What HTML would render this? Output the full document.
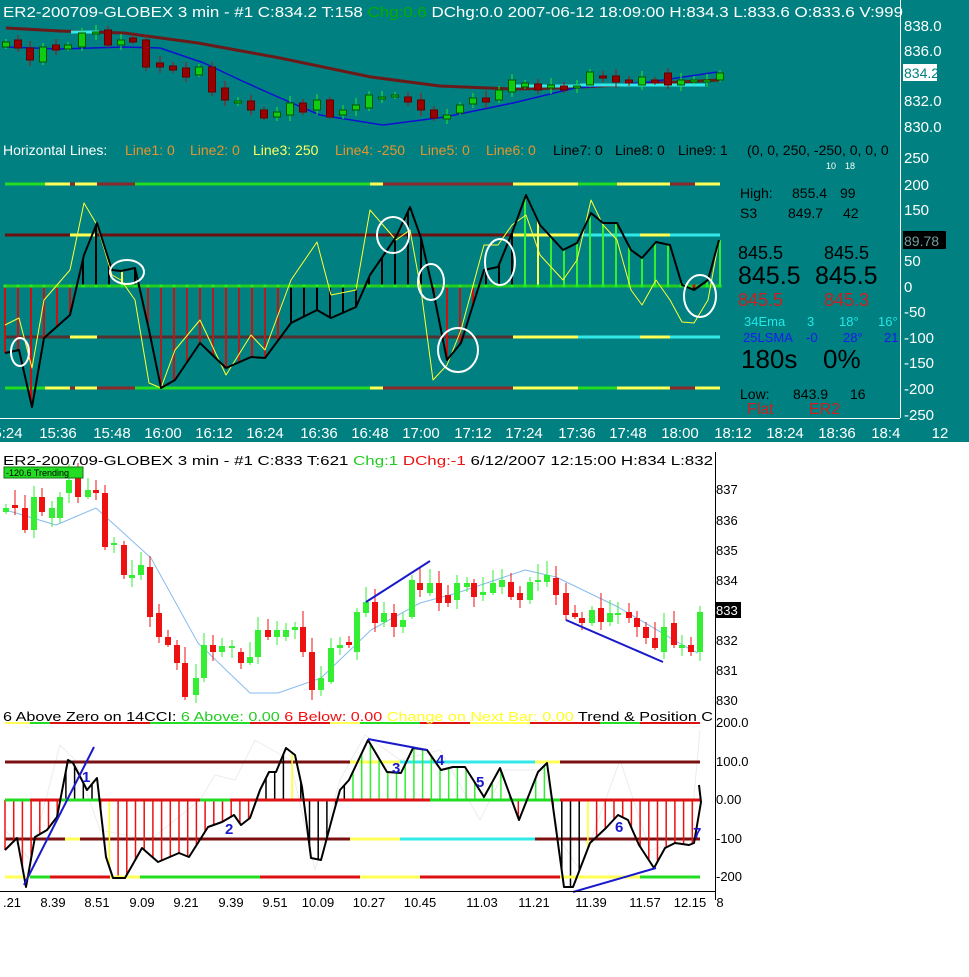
<!DOCTYPE html>
<html><head><meta charset="utf-8"><style>
html,body{margin:0;padding:0;background:#fff;width:969px;height:977px;overflow:hidden}
svg{display:block;font-family:"Liberation Sans",Arial,sans-serif}
</style></head><body>
<svg id="s" width="969" height="977" viewBox="0 0 969 977" xmlns="http://www.w3.org/2000/svg">
<rect x="0" y="0" width="969" height="442" fill="#008080"/>
<g id="dyn"></g>
<line x1="900.5" y1="0" x2="900.5" y2="418" stroke="#fff"/>
<line x1="0" y1="418.5" x2="900" y2="418.5" stroke="#fff"/>
<g fill="#fff" font-size="15">
<text x="3" y="17" textLength="900" lengthAdjust="spacingAndGlyphs">ER2-200709-GLOBEX  3 min  - #1  C:834.2  T:158  <tspan fill="#00b000">Chg:0.6</tspan>  DChg:0.0  2007-06-12  18:09:00  H:834.3  L:833.6  O:833.6  V:999</text>
<text x="904" y="31">838.0</text><text x="904" y="56">836.0</text><text x="904" y="106">832.0</text><text x="904" y="132">830.0</text>
<text x="904" y="163">250</text><text x="904" y="190">200</text><text x="904" y="215">150</text><text x="904" y="266">50</text><text x="904" y="292">0</text><text x="904" y="317">-50</text><text x="904" y="343">-100</text><text x="904" y="368">-150</text><text x="904" y="394">-200</text><text x="904" y="420">-250</text>
</g>
<rect x="903" y="64" width="34" height="17" fill="#fff"/><text x="904" y="78" font-size="14" fill="#008080">834.2</text>
<rect x="903" y="231" width="43" height="18" fill="#000"/><text x="904" y="246" font-size="14" fill="#6fa0a0">89.78</text>
<g fill="#fff" font-size="15" text-anchor="middle">
<text x="8" y="438">5:24</text><text x="58" y="438">15:36</text><text x="112" y="438">15:48</text><text x="163" y="438">16:00</text><text x="214" y="438">16:12</text><text x="265" y="438">16:24</text><text x="319" y="438">16:36</text><text x="370" y="438">16:48</text><text x="421" y="438">17:00</text><text x="473" y="438">17:12</text><text x="524" y="438">17:24</text><text x="577" y="438">17:36</text><text x="628" y="438">17:48</text><text x="680" y="438">18:00</text><text x="733" y="438">18:12</text><text x="785" y="438">18:24</text><text x="837" y="438">18:36</text><text x="890" y="438">18:48</text>
</g>
<rect x="901" y="424" width="30" height="18" fill="#008080"/>
<text x="940" y="438" font-size="15" fill="#fff" text-anchor="middle">12</text>
<g font-size="14">
<text x="3" y="155" fill="#fff">Horizontal Lines:</text>
<text x="125" y="155" fill="#e8942e">Line1: 0</text><text x="190" y="155" fill="#e8942e">Line2: 0</text>
<text x="253" y="155" fill="#ffff66">Line3: 250</text><text x="335" y="155" fill="#e8942e">Line4: -250</text>
<text x="420" y="155" fill="#e8942e">Line5: 0</text><text x="486" y="155" fill="#e8942e">Line6: 0</text>
<text x="553" y="155" fill="#000">Line7: 0</text><text x="615" y="155" fill="#000">Line8: 0</text><text x="678" y="155" fill="#000">Line9: 1</text>
<text x="747" y="155" fill="#000">(0, 0, 250, -250, 0, 0, 0</text>
</g>
<text x="826" y="169" font-size="9" fill="#fff">10</text><text x="845" y="169" font-size="9" fill="#fff">18</text>
<rect x="896" y="140" width="4" height="20" fill="#008080"/>
<g fill="#000">
<text x="740" y="198" font-size="14">High:</text><text x="792" y="198" font-size="14">855.4</text><text x="840" y="198" font-size="14">99</text>
<text x="740" y="218" font-size="14">S3</text><text x="788" y="218" font-size="14">849.7</text><text x="843" y="218" font-size="14">42</text>
<text x="738" y="259" font-size="18">845.5</text><text x="824" y="259" font-size="18">845.5</text>
<text x="738" y="284" font-size="25">845.5</text><text x="815" y="284" font-size="25">845.5</text>
<text x="738" y="306" font-size="18" fill="#cc2020">845.5</text><text x="824" y="306" font-size="18" fill="#cc2020">845.3</text>
<text x="744" y="326" font-size="13" fill="#22e8e8">34Ema</text><text x="807" y="326" font-size="13" fill="#22e8e8">3</text><text x="839" y="326" font-size="13" fill="#22e8e8">18°</text><text x="878" y="326" font-size="13" fill="#22e8e8">16°</text>
<text x="743" y="342" font-size="13" fill="#1a1aee">25LSMA</text><text x="806" y="342" font-size="13" fill="#1a1aee">-0</text><text x="843" y="342" font-size="13" fill="#1a1aee">28°</text><text x="884" y="342" font-size="13" fill="#1a1aee">21</text>
<text x="741" y="368" font-size="26">180s</text><text x="823" y="368" font-size="26">0%</text>
<text x="740" y="399" font-size="14">Low:</text><text x="793" y="399" font-size="14">843.9</text><text x="850" y="399" font-size="14">16</text>
<text x="747" y="414" font-size="16" fill="#cc2020">Flat</text><text x="809" y="414" font-size="16" fill="#cc2020">ER2</text>
</g>
<line x1="715.5" y1="452" x2="715.5" y2="900" stroke="#000"/>
<line x1="0" y1="891.5" x2="715" y2="891.5" stroke="#000"/>
<text x="3" y="465" font-size="13" fill="#000" textLength="710" lengthAdjust="spacingAndGlyphs">ER2-200709-GLOBEX  3 min  - #1  C:833  T:621  <tspan fill="#22cc22">Chg:1</tspan>  <tspan fill="#ee1111">DChg:-1</tspan>  6/12/2007  12:15:00  H:834  L:832</text>
<rect x="4" y="467" width="79" height="11" fill="#22dd22" stroke="#117711"/>
<text x="6" y="476" font-size="9" fill="#000">-120.6 Trending</text>
<g font-size="13" fill="#000">
<text x="716" y="494">837</text><text x="716" y="525">836</text><text x="716" y="555">835</text><text x="716" y="585">834</text><text x="716" y="645">832</text><text x="716" y="675">831</text><text x="716" y="705">830</text>
<text x="716" y="727">200.0</text><text x="716" y="766">100.0</text><text x="716" y="804">0.00</text><text x="716" y="843">-100</text><text x="716" y="881">-200</text>
</g>
<rect x="715" y="602" width="26" height="16" fill="#000"/><text x="716" y="615" font-size="13" fill="#fff">833</text>
<g font-size="13" fill="#000" text-anchor="middle">
<text x="12" y="907">.21</text><text x="53" y="907">8.39</text><text x="97" y="907">8.51</text><text x="142" y="907">9.09</text><text x="186" y="907">9.21</text><text x="231" y="907">9.39</text><text x="275" y="907">9.51</text><text x="318" y="907">10.09</text><text x="369" y="907">10.27</text><text x="420" y="907">10.45</text><text x="482" y="907">11.03</text><text x="534" y="907">11.21</text><text x="591" y="907">11.39</text><text x="645" y="907">11.57</text><text x="690" y="907">12.15</text><text x="720" y="907">8</text>
</g>
<text x="3" y="721" font-size="13" textLength="710" lengthAdjust="spacingAndGlyphs">6 Above Zero on 14CCI:  <tspan fill="#22cc22">6 Above: 0.00</tspan>  <tspan fill="#ee1111">6 Below: 0.00</tspan>  <tspan fill="#ffff22">Change on Next Bar: 0.00</tspan>  Trend &amp; Position C</text>
<g font-size="15" font-weight="bold" fill="#1a1acc">
<text x="82" y="782">1</text><text x="225" y="834">2</text><text x="392" y="773">3</text><text x="436" y="765">4</text><text x="476" y="787">5</text><text x="615" y="832">6</text><text x="693" y="838">7</text>
</g>
</svg>
<script>
(function(){
var NS="http://www.w3.org/2000/svg",g=document.getElementById('dyn');
function el(t,a){var e=document.createElementNS(NS,t);for(var k in a)e.setAttribute(k,a[k]);g.appendChild(e);return e;}
function line(x1,y1,x2,y2,c,w){el('line',{x1:x1,y1:y1,x2:x2,y2:y2,stroke:c,'stroke-width':w||1});}
function poly(p,c,w){el('polyline',{points:p.map(function(q){return q[0]+','+q[1]}).join(' '),fill:'none',stroke:c,'stroke-width':w||1,'stroke-linejoin':'round'});}
function segs(y,list,w){list.forEach(function(s){line(s[0],y,s[1],y,s[2],w)});}
function interp(p,x){if(x<=p[0][0])return p[0][1];for(var i=1;i<p.length;i++){if(x<=p[i][0]){var a=p[i-1],b=p[i];return a[1]+(b[1]-a[1])*(x-a[0])/(b[0]-a[0]);}}return p[p.length-1][1];}
var Y='#ffff55',G='#22dd22',B='#8a2a2a',C='#33e8e8',R='#dd1111';
poly([[6,28],[60,31],[124,33],[198,43],[280,58],[371,77],[440,86],[513,89],[560,88],[640,84],[720,80]],'#6b1a1a',3);
poly([[6,47],[60,49],[124,47],[160,48],[204,63],[240,80],[278,97],[320,115],[383,125],[445,117],[513,103],[575,88],[650,82],[717,72]],'#1010d0',1.5);
line(71,32,99,32,C,3);line(513,86,580,86,C,3);line(580,85,705,85,C,3);
var tc=[[6,42,47,'g'],[18,40,48,'r'],[30,48,60,'r'],[43,47,62,'g'],[56,45,50,'r'],[68,45,49,'g'],[82,33,47,'g'],[96,32,34,'g'],[108,30,45,'r'],[121,40,45,'g'],[133,38,42,'r'],[146,40,67,'r'],[160,63,67,'r'],[173,66,70,'r'],[186,68,77,'r'],[199,67,75,'g'],[212,67,92,'r'],[225,88,100,'r'],[238,101,103,'g'],[251,101,110,'r'],[264,110,118,'r'],[277,112,117,'g'],[290,103,115,'g'],[303,103,112,'r'],[317,100,110,'g'],[330,100,117,'r'],[343,110,115,'g'],[356,105,110,'g'],[369,95,108,'g'],[382,97,98,'g'],[395,95,97,'g'],[408,97,102,'r'],[421,100,110,'r'],[434,110,118,'r'],[447,115,119,'g'],[460,105,113,'g'],[473,98,104,'g'],[486,98,102,'r'],[499,90,100,'g'],[512,80,92,'g'],[525,83,87,'g'],[538,84,90,'r'],[551,85,88,'g'],[564,86,90,'r'],[577,86,88,'g'],[590,72,85,'g'],[603,76,78,'r'],[616,76,82,'r'],[629,80,83,'r'],[642,77,85,'g'],[655,80,83,'r'],[668,73,85,'r'],[681,80,85,'g'],[694,80,82,'g'],[707,80,82,'g'],[720,73,80,'g']];
tc.forEach(function(c,i){var col=c[3]=='g'?'#11cc11':'#990000',bd=c[3]=='g'?'#005500':'#660000';var wk=3+(i*7)%5;
line(c[0],c[1]-wk,c[0],c[2]+wk-1,c[3]=='g'?'#22ee22':'#aa1111',1);
el('rect',{x:c[0]-3.5,y:c[1],width:7,height:Math.max(2,c[2]-c[1]),fill:col,stroke:bd,'stroke-width':1});});
var band=[[5,45,G],[45,70,Y],[70,75,B],[75,97,Y],[97,135,B],[135,370,G],[370,383,Y],[383,513,B],[513,578,Y],[578,617,G],[617,670,Y],[670,695,B],[695,720,Y]];
segs(184,band,3);segs(388,band,3);
segs(235,[[5,70,'#6b1010'],[70,97,Y],[97,513,'#6b1010'],[513,578,Y],[578,640,C],[640,670,Y],[670,720,C]],3);
segs(337,[[5,70,'#553030'],[70,97,Y],[97,513,'#553030'],[513,578,Y],[578,640,C],[640,670,Y],[670,720,C]],3);
line(5,286,720,286,'#22cc22',3);
var cci=[[5,353],[19,350],[32,407],[44,338],[70,315],[84,255],[97,223],[112,270],[121,271],[135,268],[149,330],[161,388],[175,380],[200,343],[226,368],[251,357],[265,358],[291,323],[317,310],[331,318],[356,307],[370,275],[396,237],[410,207],[421,238],[433,290],[447,360],[461,343],[484,270],[498,267],[512,233],[526,195],[540,225],[563,250],[577,243],[591,213],[603,223],[617,223],[631,250],[642,258],[656,242],[670,245],[682,285],[694,290],[708,280],[719,240]];
var yel=[[5,325],[19,318],[32,368],[44,300],[70,270],[84,203],[97,225],[112,275],[121,280],[135,300],[149,383],[161,388],[175,350],[200,320],[226,375],[251,335],[265,350],[291,280],[317,242],[331,295],[356,290],[370,210],[396,240],[410,230],[421,290],[433,380],[447,365],[461,330],[484,245],[498,245],[512,225],[526,215],[540,255],[563,280],[577,260],[591,200],[603,225],[617,240],[631,290],[642,305],[656,280],[670,300],[682,322],[694,323],[708,300],[719,240]];
for(var x=5;x<=720;x+=13){var v=interp(cci,x);var col;
 if(v>286){col=(x>=430&&x<=480)||x<290?'#cc1111':'#000';if(x>130&&x<280&&x%2)col='#aa2222';}
 else{col=x>=520?'#33ee33':'#000';if(x==122||x==538)col=Y;}
 line(x,286,x,v,col,2);
 el('rect',{x:x-1.5,y:284.5,width:3,height:3,fill:v>286&&x>640?'#cc1111':'#22ee22'});}
poly(yel,'#ffff33',1);
poly(cci,'#000',2);
[[20,352,9,14],[127,272,17,12],[393,235,16,18],[431,282,13,18],[458,350,20,22],[500,262,15,23],[700,296,16,21]].forEach(function(e){el('ellipse',{cx:e[0],cy:e[1],rx:e[2],ry:e[3],fill:'none',stroke:'#fff','stroke-width':2});});
poly([[6,510],[56,525],[96,508],[151,558],[198,643],[250,693],[278,693],[321,678],[371,630],[420,603],[457,593],[525,570],[556,577],[618,607],[686,647],[698,653]],'#88bbee',1);
var bc=[[6,508,512,'g'],[15,505,508,'r'],[25,508,530,'r'],[34,497,530,'g'],[42,497,512,'r'],[52,508,518,'g'],[60,497,518,'g'],[69,480,493,'g'],[78,477,497,'r'],[88,490,497,'g'],[96,490,493,'r'],[105,493,547,'r'],[114,543,545,'g'],[124,545,575,'r'],[132,575,578,'g'],[141,565,575,'g'],[150,567,617,'r'],[159,613,637,'r'],[168,637,645,'r'],[177,645,663,'r'],[185,663,697,'r'],[196,678,695,'g'],[204,645,678,'g'],[213,645,652,'r'],[222,646,652,'g'],[232,646,648,'g'],[241,652,663,'r'],[250,657,663,'g'],[258,630,657,'g'],[268,630,637,'r'],[277,630,637,'g'],[286,630,637,'g'],[295,627,630,'g'],[303,627,652,'r'],[312,652,690,'r'],[321,678,690,'g'],[331,648,682,'g'],[340,645,648,'g'],[349,642,645,'r'],[357,612,652,'g'],[366,602,613,'g'],[375,602,623,'r'],[384,613,622,'g'],[394,613,627,'r'],[403,620,627,'g'],[412,580,617,'g'],[420,583,590,'r'],[430,583,593,'g'],[439,583,603,'r'],[448,595,603,'r'],[457,583,600,'g'],[467,583,587,'g'],[474,583,597,'r'],[483,592,595,'g'],[493,583,593,'g'],[502,580,587,'g'],[511,582,597,'r'],[520,593,600,'r'],[530,582,600,'g'],[538,580,582,'g'],[547,575,582,'g'],[556,578,595,'r'],[566,593,615,'r'],[575,613,617,'r'],[582,618,623,'r'],[592,610,623,'g'],[601,608,622,'r'],[610,613,622,'g'],[618,613,615,'g'],[629,612,618,'r'],[637,618,627,'r'],[646,627,638,'r'],[655,638,648,'r'],[664,627,652,'g'],[674,623,645,'r'],[682,645,648,'g'],[691,645,652,'r'],[700,612,652,'g']];
bc.forEach(function(c,i){var col=c[3]=='g'?'#33ee33':'#ee1111';var wk=4+(i*11)%13;
line(c[0],c[1]-wk,c[0],c[2]+(i*5)%9+2,col,1);
el('rect',{x:c[0]-3,y:c[1],width:6,height:Math.max(2,c[2]-c[1]),fill:col});});
line(366,602,430,561,'#1a1acc',2);line(566,620,663,662,'#1a1acc',2);
segs(723,[[5,30,Y],[30,50,G],[50,150,R],[150,250,G],[250,330,R],[330,360,Y],[360,420,G],[420,470,R],[470,530,Y],[530,600,R],[600,640,G],[640,700,R]],2);
var bcc=[[5,850],[17,838],[26,887],[35,837],[47,830],[57,817],[68,760],[73,763],[87,790],[97,778],[106,857],[113,878],[125,878],[142,848],[158,862],[179,853],[189,857],[208,827],[222,822],[234,815],[241,825],[250,818],[260,790],[269,772],[276,772],[286,748],[295,755],[302,787],[311,858],[321,860],[333,815],[340,790],[349,780],[368,740],[387,772],[401,773],[413,748],[427,750],[441,770],[453,767],[465,767],[484,797],[500,768],[519,820],[538,772],[547,763],[564,887],[573,887],[590,843],[606,828],[618,815],[628,820],[639,845],[654,868],[665,848],[675,843],[689,845],[694,843],[701,802],[699,785]];
poly([[5,830],[30,860],[60,745],[75,760],[100,830],[150,840],[200,800],[215,775],[235,780],[255,740],[290,760],[315,870],[340,780],[365,735],[400,760],[440,750],[480,820],[505,770],[525,770],[545,770],[560,840],[580,870],[620,760],[650,850],[690,840],[700,730]],'#ececec',1);
segs(762,[[5,350,'#7a1010'],[350,400,Y],[400,535,C],[535,560,Y],[560,700,'#7a1010']],3);
segs(839,[[5,65,'#7a1010'],[65,80,Y],[80,350,'#7a1010'],[350,400,Y],[400,535,C],[535,700,'#7a1010']],3);
for(var x=5;x<=700;x+=8.7){var v=interp(bcc,x);var col;
 if(v>800){col=((x>300&&x<345)||(x>555&&x<592))?'#000':'#ee1111';}
 else{col=(x>345&&x<550)?'#33ee33':'#000';}
 if(Math.abs(x-110)<4||Math.abs(x-296)<4||Math.abs(x-590)<4)col='#ffff22';
 line(x,800,x,v,col,1.5);}
segs(800,[[5,30,G],[30,60,R],[60,100,G],[100,430,R],[200,230,G],[430,560,G],[560,700,R]],3);
segs(877,[[5,30,Y],[30,50,G],[50,110,R],[110,140,Y],[140,260,G],[260,360,R],[360,420,Y],[420,560,R],[560,640,Y],[640,700,G]],3);
poly(bcc,'#000',2);
line(24,885,94,747,'#1a1acc',2);line(368,739,427,750,'#1a1acc',2);line(573,892,656,868,'#1a1acc',2);
var s=document.getElementById('s');s.insertBefore(g,s.children[1]);
})();
</script>
</body></html>
